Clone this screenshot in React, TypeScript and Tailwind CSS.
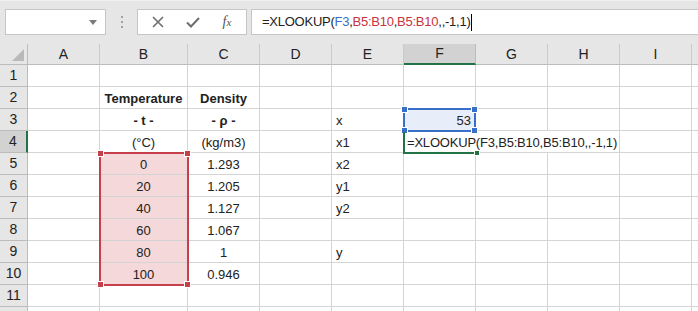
import React from "react";

const cols = ["A", "B", "C", "D", "E", "F", "G", "H", "I", "J"];

type Cell = { text: string; bold?: boolean; align?: "l" | "c" | "r" };

const data: Record<number, Record<string, Cell>> = {
  2: { B: { text: "Temperature", bold: true }, C: { text: "Density", bold: true } },
  3: {
    B: { text: "- t -", bold: true },
    C: { text: "- ρ -", bold: true },
    E: { text: "x", align: "l" },
    F: { text: "53", align: "r" },
  },
  4: { B: { text: "(°C)" }, C: { text: "(kg/m3)" }, E: { text: "x1", align: "l" } },
  5: { B: { text: "0" }, C: { text: "1.293" }, E: { text: "x2", align: "l" } },
  6: { B: { text: "20" }, C: { text: "1.205" }, E: { text: "y1", align: "l" } },
  7: { B: { text: "40" }, C: { text: "1.127" }, E: { text: "y2", align: "l" } },
  8: { B: { text: "60" }, C: { text: "1.067" } },
  9: { B: { text: "80" }, C: { text: "1" }, E: { text: "y", align: "l" } },
  10: { B: { text: "100" }, C: { text: "0.946" } },
};

const rows = [1, 2, 3, 4, 5, 6, 7, 8, 9, 10, 11];

const Handle: React.FC<{ className: string; color: string }> = ({ className, color }) => (
  <span className={`absolute w-[7px] h-[7px] border border-white ${color} ${className}`} />
);

const Toolbar: React.FC = () => (
  <div className="h-[44px] bg-[#e6e6e6] flex items-start pt-[8px] border-t border-[#f0f0f0]">
    <div className="ml-[5px] w-[101px] h-[26px] bg-white border border-[#c6c6c6] flex items-center justify-end pr-[8px]">
      <svg width="8" height="5" viewBox="0 0 8 5">
        <path d="M0 0h8L4 5z" fill="#7a7a7a" />
      </svg>
    </div>
    <div className="w-[31px] h-[26px] flex flex-col items-center justify-center gap-[3px]">
      <span className="w-[2px] h-[2px] bg-[#a0a0a0]" />
      <span className="w-[2px] h-[2px] bg-[#a0a0a0]" />
      <span className="w-[2px] h-[2px] bg-[#a0a0a0]" />
    </div>
    <div className="w-[110px] h-[26px] bg-white border border-[#c6c6c6] flex items-center">
      <div className="w-[40px] flex justify-center">
        <svg width="12" height="12" viewBox="0 0 12 12">
          <path d="M1 1l10 10M11 1L1 11" stroke="#6e6e6e" strokeWidth="1.6" />
        </svg>
      </div>
      <div className="w-[30px] flex justify-center">
        <svg width="14" height="11" viewBox="0 0 14 11">
          <path d="M1 5.5l4 4L13 1" stroke="#6e6e6e" strokeWidth="2" fill="none" />
        </svg>
      </div>
      <div className="w-[38px] flex justify-center">
        <span className="italic text-[14px] text-[#555] leading-none" style={{ fontFamily: '"Liberation Serif", serif' }}>
          f<span className="text-[11px]">x</span>
        </span>
      </div>
    </div>
    <div className="ml-[4px] flex-1 h-[26px] bg-white border border-r-0 border-[#c6c6c6] flex items-center pl-[10px] text-[13px] tracking-[-0.25px] text-[#222]">
      <span>=XLOOKUP(</span>
      <span className="text-[#3a6fc8]">F3</span>
      <span>,</span>
      <span className="text-[#c8323c]">B5:B10</span>
      <span>,</span>
      <span className="text-[#c8323c]">B5:B10</span>
      <span>,,-1,1)</span>
      <span className="ml-[1px] w-[1px] h-[17px] bg-black" />
    </div>
  </div>
);

const App: React.FC = () => {
  const grid = "grid grid-cols-[28px_72px_88px_72px_72px_72px_72px_72px_72px_72px_72px]";
  return (
    <div
      className="w-[698px] h-[311px] overflow-hidden bg-white text-[#222] relative"
      style={{ fontFamily: '"Liberation Sans", Arial, sans-serif' }}
    >
      <Toolbar />
      <div className="relative w-[790px]">
        <div className={grid}>
          <div className="h-[21px] bg-[#e6e6e6] border-r border-b border-[#bcbcbc] relative">
            <svg className="absolute right-[3px] bottom-[3px]" width="12" height="12" viewBox="0 0 12 12">
              <path d="M12 0V12H0z" fill="#b9b9b9" />
            </svg>
          </div>
          {cols.map((c) => (
            <div
              key={c}
              className={
                c === "F"
                  ? "h-[21px] bg-[#d2d2d2] border-r border-[#bcbcbc] border-b-2 border-b-[#217346] flex items-center justify-center text-[14px] text-[#222]"
                  : "h-[21px] bg-[#e6e6e6] border-r border-b border-[#cacaca] border-b-[#bcbcbc] flex items-center justify-center text-[14px] text-[#222]"
              }
            >
              {c === "J" ? "" : c}
            </div>
          ))}
          {rows.map((r) => (
            <React.Fragment key={r}>
              <div
                className={
                  r === 4
                    ? "h-[22px] bg-[#d2d2d2] border-b border-[#bcbcbc] border-r-2 border-r-[#217346] flex items-center justify-center text-[14px]"
                    : "h-[22px] bg-[#e6e6e6] border-b border-r border-[#bcbcbc] flex items-center justify-center text-[14px]"
                }
              >
                {r}
              </div>
              {cols.map((c) => {
                if (r === 4 && (c === "G" || c === "H")) return null;
                if (r === 4 && c === "F") {
                  return (
                    <div
                      key={c}
                      className="col-span-3 h-[22px] border-r border-b border-[#d4d4d4] bg-white text-[13px] tracking-[-0.2px] leading-[23px] pl-[3px] whitespace-nowrap"
                    >
                      =XLOOKUP(F3,B5:B10,B5:B10,,-1,1)
                    </div>
                  );
                }
                const cell = data[r]?.[c];
                const pink = c === "B" && r >= 5 && r <= 10;
                const blue = c === "F" && r === 3;
                const align =
                  cell?.align === "l" ? "text-left pl-[4px]" : cell?.align === "r" ? "text-right pr-[4px]" : "text-center";
                return (
                  <div
                    key={c}
                    className={`h-[22px] border-r border-b border-[#d4d4d4] text-[13px] leading-[23px] whitespace-nowrap ${align} ${
                      pink ? "bg-[#f4d8da]" : blue ? "bg-[#e8eef9]" : "bg-white"
                    } ${cell?.bold ? "font-bold" : ""}`}
                  >
                    {cell?.text ?? ""}
                  </div>
                );
              })}
            </React.Fragment>
          ))}
          <div className="h-[22px] bg-[#e6e6e6] border-r border-[#bcbcbc]" />
          {cols.map((c) => (
            <div key={c} className="h-[22px] border-r border-[#d4d4d4] bg-white" />
          ))}
        </div>

        {/* B5:B10 reference range */}
        <div className="absolute left-[99px] top-[108px] w-[90px] h-[134px] border-2 border-[#c6404c] pointer-events-none">
          <Handle className="-left-[4px] -top-[4px]" color="bg-[#c6404c]" />
          <Handle className="-right-[4px] -top-[4px]" color="bg-[#c6404c]" />
          <Handle className="-left-[4px] -bottom-[4px]" color="bg-[#c6404c]" />
          <Handle className="-right-[4px] -bottom-[4px]" color="bg-[#c6404c]" />
        </div>

        {/* F3 reference */}
        <div className="absolute left-[403px] top-[64px] w-[73px] h-[24px] border-2 border-[#3a6fc8] pointer-events-none">
          <Handle className="-left-[4px] -top-[4px]" color="bg-[#3a6fc8]" />
          <Handle className="-right-[4px] -top-[4px]" color="bg-[#3a6fc8]" />
          <Handle className="-left-[4px] -bottom-[4px]" color="bg-[#3a6fc8]" />
          <Handle className="-right-[4px] -bottom-[4px]" color="bg-[#3a6fc8]" />
        </div>

        {/* F4 active cell */}
        <div className="absolute left-[403px] top-[88px] w-[74px] h-[22px] border-l-2 border-b-2 border-[#217346] pointer-events-none">
          <span className="absolute -right-[3px] -bottom-[4px] w-[6px] h-[6px] bg-[#217346] border border-white" />
        </div>
      </div>
    </div>
  );
};

export default App;
